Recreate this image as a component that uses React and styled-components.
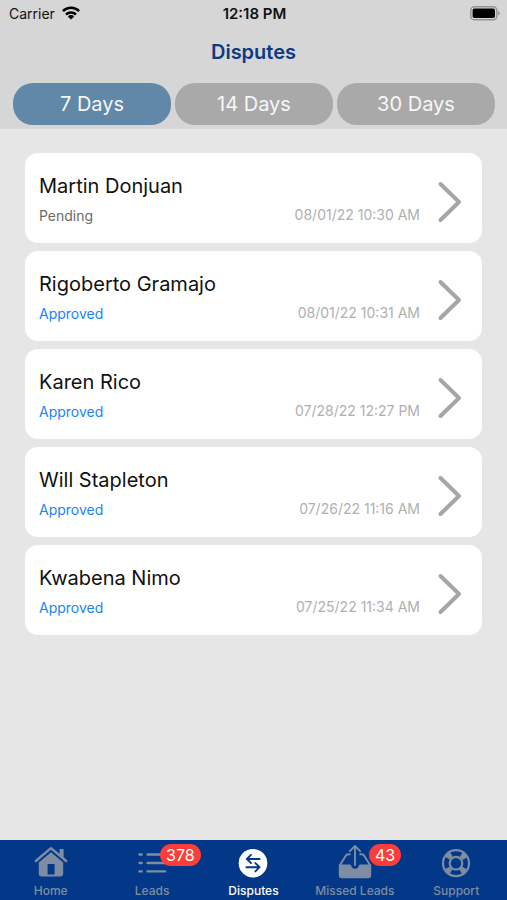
import React, { useState } from "react";
import styled, { createGlobalStyle } from "styled-components";

const GlobalStyle = createGlobalStyle`
  * { box-sizing: border-box; }
  body {
    margin: 0;
    background: #e6e6e6;
    font-family: Inter, "Liberation Sans", sans-serif;
    color: #111;
  }
  button { font: inherit; border: 0; cursor: pointer; }
`;

const Screen = styled.div`
  min-height: 100vh;
  display: flex;
  flex-direction: column;
`;

const Header = styled.header`
  background: #d6d6d6;
  padding-bottom: 4px;
`;

const StatusBar = styled.div`
  display: grid;
  grid-template-columns: 1fr auto 1fr;
  align-items: center;
  height: 28px;
  padding: 0 7px 0 9px;
  font-size: 14px;
  line-height: 20px;
`;

const Carrier = styled.span`
  display: flex;
  align-items: center;
  gap: 7px;
`;

const Clock = styled.time`
  font-size: 15px;
  font-weight: 600;
`;

const BatterySlot = styled.span`
  display: flex;
  justify-content: flex-end;
`;

const Title = styled.h1`
  margin: 0;
  padding: 12px 0 18px;
  font-size: 20px;
  line-height: 25px;
  font-weight: 600;
  text-align: center;
  color: #0c3a82;
`;

const Tabs = styled.div`
  display: grid;
  grid-template-columns: repeat(3, 1fr);
  gap: 4px;
  padding: 0 12px 0 13px;
`;

const Tab = styled.button`
  height: 42px;
  padding: 0;
  border-radius: 20px;
  && { font-size: 20px; }
  color: #f7f7f7;
  background: ${(p) => (p.$active ? "#6188a8" : "#a9a9a9")};
`;

const List = styled.ul`
  flex: 1;
  margin: 0;
  padding: 24px 25px;
  list-style: none;
  display: flex;
  flex-direction: column;
  gap: 8px;
`;

const Card = styled.button`
  width: 100%;
  height: 90px;
  display: flex;
  align-items: center;
  padding: 0 19px 0 14px;
  border-radius: 13px;
  background: #fff;
  color: #111;
  text-align: left;
`;

const Details = styled.span`
  flex: 1;
  display: grid;
  grid-template-columns: 1fr auto;
  align-items: end;
  row-gap: 6px;
  padding-top: 4px;
`;

const Name = styled.span`
  grid-column: 1 / -1;
  font-size: 20px;
  line-height: 24px;
`;

const Status = styled.span`
  font-size: 14px;
  line-height: 20px;
  color: ${(p) => (p.$approved ? "#1a84f5" : "#6b6b6b")};
`;

const When = styled.time`
  font-size: 14px;
  line-height: 22px;
  color: #b0b0b0;
`;

const Chevron = styled.svg`
  width: 26px;
  height: 42px;
  margin: 8px 0 0 17px;
`;

const NavBar = styled.nav`
  position: sticky;
  bottom: 0;
  height: 60px;
  display: grid;
  grid-template-columns: repeat(5, 1fr);
  background: #023887;
`;

const NavItem = styled.a`
  display: flex;
  flex-direction: column;
  align-items: center;
  padding-top: 4px;
  color: ${(p) => (p.$active ? "#fff" : "#7f8da3")};
  text-decoration: none;
  font-size: 12px;
  line-height: 16px;
  font-weight: 500;
  white-space: nowrap;
`;

const IconSlot = styled.span`
  position: relative;
  height: 39px;

  svg { display: block; }
`;

const Badge = styled.span`
  position: absolute;
  top: 0;
  left: ${(p) => (p.$wide ? "23px" : "31px")};
  padding: 0 6px;
  border-radius: 11px;
  background: #fc3d39;
  color: #fff;
  font-size: 16px;
  line-height: 22px;
  font-weight: 400;
`;

const WifiIcon = () => (
  <svg width="18" height="16" viewBox="0 0 18 16" aria-hidden="true">
    <g fill="none" stroke="#000" strokeWidth="2.5">
      <path d="M.9 5.1a11.5 11.5 0 0 1 16.2 0" />
      <path d="M4 8.5a7.2 7.2 0 0 1 10 0" />
    </g>
    <path d="M9 13.6 5.8 10.4a4.6 4.6 0 0 1 6.4 0Z" fill="#000" />
  </svg>
);

const BatteryIcon = () => (
  <svg width="30" height="17" viewBox="0 0 30 17" aria-hidden="true">
    <rect x=".8" y=".8" width="26" height="13" rx="3.6" fill="none" stroke="#939393" strokeWidth="1.4" />
    <rect x="2.6" y="2.6" width="22.4" height="9.4" rx="1.8" fill="#000" />
    <path d="M28.2 5q1.6.8 1.6 2.3t-1.6 2.3Z" fill="#939393" />
  </svg>
);

const HomeIcon = () => (
  <svg width="34" height="36" viewBox="0 0 34 36" aria-hidden="true">
    <path d="M1.8 17 17 4.2l15.2 12.8" fill="none" stroke="currentColor" strokeWidth="2.4" strokeLinecap="round" strokeLinejoin="round" />
    <path d="M25.6 5h4v9.2l-4-3.4Z" fill="currentColor" />
    <path fillRule="evenodd" d="M17 8.2 29.2 18.4V29.5a3 3 0 0 1-3 3H7.8a3 3 0 0 1-3-3V18.4ZM13.6 20v10.4h7V20Z" fill="currentColor" />
  </svg>
);

const ListIcon = () => (
  <svg width="30" height="36" viewBox="0 0 30 36" aria-hidden="true">
    <path d="M2.5 10.5h2.2M10.5 10.5h17.5M2.5 19h2.2M10.5 19h17.5M2.5 27.4h2.2M10.5 27.4h17.5" stroke="currentColor" strokeWidth="2.4" strokeLinecap="round" />
  </svg>
);

const DisputesIcon = () => (
  <svg width="30" height="36" viewBox="0 0 30 36" aria-hidden="true">
    <circle cx="15" cy="19.2" r="14.3" fill="#fff" />
    <path d="M21.6 15H9.2m3.8-4.1L8.9 15l4.1 4.1M8.4 23.2h12.8m-3.8-4.1 4.1 4.1-4.1 4.1" fill="none" stroke="#023887" strokeWidth="1.9" strokeLinecap="round" strokeLinejoin="round" />
  </svg>
);

const OutboxIcon = () => (
  <svg width="34" height="36" viewBox="0 0 34 36" aria-hidden="true">
    <path d="M.8 20.6h11q1.2 0 1.4 1.2a3.9 3.9 0 0 0 7.6 0q.2-1.2 1.4-1.2h11v10.6a3 3 0 0 1-3 3H3.8a3 3 0 0 1-3-3Z" fill="currentColor" />
    <path d="M1.8 21.2 8 11.4q.8-1.2 2.4-1.2h2.2M32.2 21.2 26 11.4q-.8-1.2-2.4-1.2h-2.2" fill="none" stroke="currentColor" strokeWidth="1.9" />
    <path d="M17 21V2.4M11.8 7.2 17 2l5.2 5.2" fill="none" stroke="currentColor" strokeWidth="1.9" strokeLinecap="round" strokeLinejoin="round" />
  </svg>
);

const SupportIcon = () => (
  <svg width="30" height="36" viewBox="0 0 30 36" aria-hidden="true">
    <g fill="none" stroke="currentColor">
      <circle cx="15" cy="19.2" r="13" strokeWidth="2.2" />
      <circle cx="15" cy="19.2" r="6.3" strokeWidth="2.2" />
      <circle cx="15" cy="19.2" r="9.8" strokeWidth="5" strokeDasharray="5.4 9.994" strokeDashoffset="-4.997" />
    </g>
  </svg>
);

const periods = ["7 Days", "14 Days", "30 Days"];

const disputes = [
  { name: "Martin Donjuan", status: "Pending", when: "08/01/22 10:30 AM" },
  { name: "Rigoberto Gramajo", status: "Approved", when: "08/01/22 10:31 AM" },
  { name: "Karen Rico", status: "Approved", when: "07/28/22 12:27 PM" },
  { name: "Will Stapleton", status: "Approved", when: "07/26/22 11:16 AM" },
  { name: "Kwabena Nimo", status: "Approved", when: "07/25/22 11:34 AM" },
];

const navItems = [
  { label: "Home", Icon: HomeIcon },
  { label: "Leads", Icon: ListIcon, badge: "378" },
  { label: "Disputes", Icon: DisputesIcon, active: true },
  { label: "Missed Leads", Icon: OutboxIcon, badge: "43" },
  { label: "Support", Icon: SupportIcon },
];

export default function App() {
  const [period, setPeriod] = useState("7 Days");

  return (
    <Screen>
      <GlobalStyle />
      <Header>
        <StatusBar>
          <Carrier>
            Carrier
            <WifiIcon />
          </Carrier>
          <Clock>12:18 PM</Clock>
          <BatterySlot>
            <BatteryIcon />
          </BatterySlot>
        </StatusBar>
        <Title>Disputes</Title>
        <Tabs>
          {periods.map((p) => (
            <Tab key={p} type="button" $active={p === period} aria-pressed={p === period} onClick={() => setPeriod(p)}>
              {p}
            </Tab>
          ))}
        </Tabs>
      </Header>
      <List>
        {disputes.map((d) => (
          <li key={d.name}>
            <Card type="button">
              <Details>
                <Name>{d.name}</Name>
                <Status $approved={d.status === "Approved"}>{d.status}</Status>
                <When>{d.when}</When>
              </Details>
              <Chevron viewBox="0 0 26 42" aria-hidden="true">
                <path d="m3.5 3 18.5 18L3.5 39" fill="none" stroke="#a6a6a6" strokeWidth="4" strokeLinecap="round" strokeLinejoin="round" />
              </Chevron>
            </Card>
          </li>
        ))}
      </List>
      <NavBar>
        {navItems.map(({ label, Icon, badge, active }) => (
          <NavItem key={label} href="#" $active={active} aria-current={active ? "page" : undefined}>
            <IconSlot>
              <Icon />
              {badge && <Badge $wide={badge.length > 2}>{badge}</Badge>}
            </IconSlot>
            {label}
          </NavItem>
        ))}
      </NavBar>
    </Screen>
  );
}
